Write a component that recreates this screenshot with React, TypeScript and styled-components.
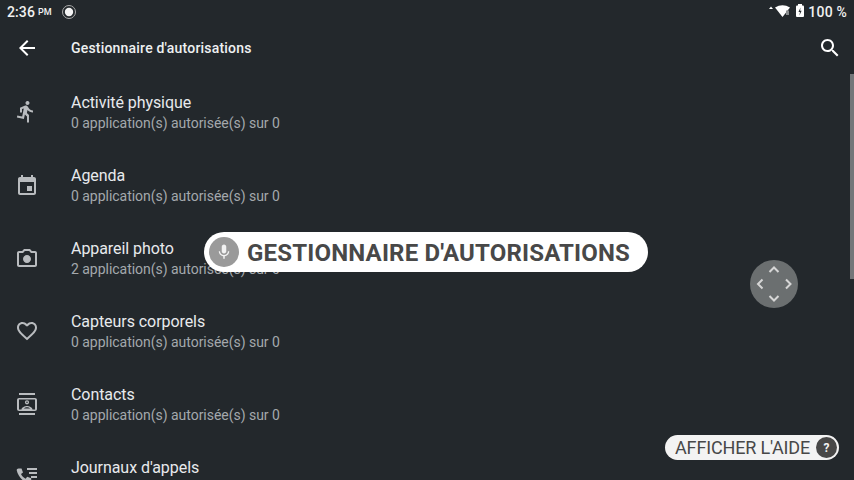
import React from "react";
import styled, { createGlobalStyle } from "styled-components";

const Global = createGlobalStyle`
  html, body { margin: 0; padding: 0; width: 854px; height: 480px; overflow: hidden; background: #23282c; }
  * { box-sizing: border-box; }
`;

const Screen = styled.div`
  position: relative;
  width: 854px;
  height: 480px;
  overflow: hidden;
  background: #23282c;
  font-family: Roboto, sans-serif;
  color: #fff;
  display: flex;
  flex-direction: column;
`;

const StatusBar = styled.div`
  height: 24px;
  flex: none;
  display: flex;
  align-items: center;
  padding: 0 7px 0 7px;
  color: #f1f1f1;
`;
const Clock = styled.span`
  font-size: 14px;
  font-weight: 500;
  letter-spacing: 0.1px;
`;
const Meridiem = styled.span`
  font-size: 9px;
  font-weight: 500;
  margin-left: 3px;
`;
const StatusLeftIcon = styled.svg`
  width: 16px;
  height: 16px;
  margin-left: 9px;
`;
const Spacer = styled.div`
  flex: 1;
`;
const StatusIcons = styled.svg`
  width: 36px;
  height: 16px;
  flex: none;
`;
const Battery = styled.span`
  font-size: 14px;
  font-weight: 500;
  margin-left: 3px;
  letter-spacing: 0.2px;
`;

const AppBar = styled.div`
  height: 48px;
  flex: none;
  display: flex;
  align-items: center;
  padding: 0 12px 0 15px;
`;
const AppIcon = styled.svg`
  width: 24px;
  height: 24px;
  fill: #fff;
  flex: none;
`;
const Title = styled.h1`
  margin: 0 0 0 32px;
  font-size: 14px;
  font-weight: 500;
  letter-spacing: 0.2px;
  color: #eef0f1;
  flex: 1;
`;

const List = styled.div`
  padding-top: 4px;
  display: flex;
  flex-direction: column;
`;
const Row = styled.div`
  height: 73px;
  flex: none;
  display: flex;
  align-items: center;
  padding-left: 15px;
`;
const RowIcon = styled.svg`
  width: 24px;
  height: 24px;
  fill: #b9bcbf;
  fill-rule: evenodd;
  flex: none;
  margin-right: 32px;
`;
const RowText = styled.div`
  display: flex;
  flex-direction: column;
`;
const RowTitle = styled.div`
  font-size: 16px;
  line-height: 21px;
  letter-spacing: -0.06px;
  color: #e8eaed;
`;
const RowSub = styled.div`
  font-size: 14px;
  line-height: 21px;
  letter-spacing: -0.03px;
  color: #a4a8ac;
`;

const Scrollbar = styled.div`
  position: absolute;
  right: 0;
  top: 74px;
  width: 4px;
  height: 205px;
  background: #737679;
`;

const VoicePill = styled.div`
  position: absolute;
  left: 204px;
  top: 232px;
  width: 444px;
  height: 40px;
  border-radius: 20px;
  background: #fff;
  display: flex;
  align-items: center;
  padding-left: 5px;
`;
const MicCircle = styled.div`
  width: 30px;
  height: 30px;
  border-radius: 50%;
  background: #9a9a9a;
  display: flex;
  align-items: center;
  justify-content: center;
  flex: none;
`;
const PillText = styled.span`
  margin: 1px 0 0 8px;
  font-size: 24px;
  font-weight: 700;
  letter-spacing: 0.18px;
  color: #484848;
  white-space: nowrap;
`;

const DPad = styled.div`
  position: absolute;
  left: 750px;
  top: 260px;
  width: 48px;
  height: 48px;
  border-radius: 50%;
  background: #6b6f70;
`;
const DPadIcon = styled.svg`
  display: block;
  width: 48px;
  height: 48px;
  fill: none;
  stroke: #d6d6d6;
  stroke-width: 2;
`;

const HelpPill = styled.div`
  position: absolute;
  left: 665px;
  top: 435px;
  width: 174px;
  height: 25px;
  border-radius: 13px;
  background: #f3f3f3;
  display: flex;
  align-items: center;
  padding-left: 10px;
`;
const HelpText = styled.span`
  font-size: 18px;
  letter-spacing: -0.15px;
  color: #484848;
  white-space: nowrap;
`;
const HelpBadge = styled.span`
  position: absolute;
  right: 2px;
  top: 2px;
  width: 21px;
  height: 21px;
  border-radius: 50%;
  background: #484848;
  color: #f3f3f3;
  font-size: 12px;
  font-weight: 700;
  display: flex;
  align-items: center;
  justify-content: center;
`;

const rows = [
  { t: "Activité physique", s: "0 application(s) autorisée(s) sur 0", o: "translate(-1 -1.5)", d: "M13.49 5.48c1.1 0 2-.9 2-2s-.9-2-2-2-2 .9-2 2 .9 2 2 2zm-3.6 13.9l1-4.4 2.1 2v6h2v-7.5l-2.1-2 .6-3c1.3 1.5 3.3 2.5 5.5 2.5v-2c-1.9 0-3.5-1-4.3-2.4l-1-1.6c-.4-.6-1-1-1.7-1-.3 0-.5.1-.8.1l-5.2 2.2v4.7h2v-3.4l1.8-.7-1.6 8.1-4.9-1-.4 2 7 1.4z" },
  { t: "Agenda", s: "0 application(s) autorisée(s) sur 0", o: "translate(0 0)", d: "M17 12h-5v5h5v-5zM16 1v2H8V1H6v2H5c-1.11 0-1.99.9-1.99 2L3 19c0 1.1.89 2 2 2h14c1.1 0 2-.9 2-2V5c0-1.1-.9-2-2-2h-1V1h-2zm3 18H5V8h14v11z" },
  { t: "Appareil photo", s: "2 application(s) autorisée(s) sur 0", o: "translate(0 -1)", d: "M20 5h-3.17L15 3H9L7.17 5H4c-1.1 0-2 .9-2 2v12c0 1.1.9 2 2 2h16c1.1 0 2-.9 2-2V7c0-1.1-.9-2-2-2zm0 14H4V7h4.05l1.83-2h4.24l1.83 2H20v12zM12 9c-2.21 0-4 1.79-4 4s1.79 4 4 4 4-1.79 4-4-1.79-4-4-4z" },
  { t: "Capteurs corporels", s: "0 application(s) autorisée(s) sur 0", o: "translate(0 -1)", d: "M16.5 3c-1.74 0-3.41.81-4.5 2.09C10.91 3.81 9.24 3 7.5 3 4.42 3 2 5.42 2 8.5c0 3.78 3.4 6.86 8.55 11.54L12 21.35l1.45-1.32C18.6 15.36 22 12.28 22 8.5 22 5.42 19.58 3 16.5 3zm-4.4 15.55l-.1.1-.1-.1C7.14 14.24 4 11.39 4 8.5 4 6.5 5.5 5 7.5 5c1.54 0 3.04.99 3.57 2.36h1.87C13.46 5.99 14.96 5 16.5 5c2 0 3.5 1.5 3.5 3.5 0 2.89-3.14 5.74-7.9 10.05z" },
  { t: "Contacts", s: "0 application(s) autorisée(s) sur 0", o: "translate(0 0)", d: "M20 0H4v2h16V0zM4 22h16v-2H4v2zM20 5H4c-1.1 0-2 .9-2 2v9c0 1.1.9 2 2 2h16c1.1 0 2-.9 2-2V7c0-1.1-.9-2-2-2zm0 11.5H4V6.5h16v10zM12 7.200a2.100 2.100 0 1 0 0 4.200 2.100 2.100 0 0 0 0-4.200zm0 1.300a.8.8 0 1 1 0 1.600.8.8 0 0 1 0-1.600zM6.500 16.500c0-2 3.500-3.500 5.500-3.500s5.500 1.500 5.500 3.500zm2.300-1h6.400c-.8-.7-2.200-1.200-3.200-1.200s-2.400.5-3.200 1.200z" },
  { t: "Journaux d'appels", s: "0 application(s) autorisée(s) sur 0", o: "translate(0 -2)", d: "M3.5 4.500h3l1.500 4-2 1.600c.9 2 2.600 3.700 4.600 4.600l1.600-2 4 1.500v3c0 1-.8 1.800-1.800 1.800C8.800 19 3 12.400 1.700 6.300 1.700 5.300 2.500 4.500 3.500 4.500zM12 4h10v2H12V4zm2 4h8v2h-8V8zm2 4h6v2h-6v-2z" },
];

export default function App() {
  return (
    <Screen>
      <Global />
      <StatusBar>
        <Clock>2:36</Clock>
        <Meridiem>PM</Meridiem>
        <StatusLeftIcon viewBox="0 0 16 16">
          <circle cx="8" cy="8" r="6.5" fill="none" stroke="#aaa" strokeWidth="1" />
          <circle cx="8" cy="8" r="4.2" fill="#f4f4f4" />
        </StatusLeftIcon>
        <Spacer />
        <StatusIcons viewBox="0 0 36 16">
          <path d="M0 5l2-2.500L4 5z" fill="#fff" />
          <path d="M6 3.500Q13.500-1 21 3.500L13.500 13z" fill="#fff" />
          <path d="M17 6.500h3v4.500h-3z" fill="#8a8d8f" />
          <rect x="27" y="1.500" width="8" height="11.500" rx="1" fill="#fff" />
          <rect x="29" y="0" width="4" height="2" fill="#fff" />
          <path d="M31.500 3.500l-2 4.500h1.500l-.6 3.500 2.200-4.700h-1.500z" fill="#23282c" />
        </StatusIcons>
        <Battery>100 %</Battery>
      </StatusBar>
      <AppBar>
        <AppIcon viewBox="0 0 24 24">
          <path d="M20 11H7.830l5.590-5.590L12 4l-8 8 8 8 1.410-1.410L7.830 13H20v-2z" />
        </AppIcon>
        <Title>Gestionnaire d'autorisations</Title>
        <AppIcon viewBox="0 0 24 24">
          <path d="M15.500 14h-.79l-.28-.27C15.410 12.590 16 11.110 16 9.500 16 5.910 13.090 3 9.500 3S3 5.910 3 9.500 5.910 16 9.500 16c1.610 0 3.090-.59 4.230-1.570l.27.28v.79l5 4.990L20.490 19l-4.990-5zm-6 0C7.010 14 5 11.990 5 9.500S7.010 5 9.500 5 14 7.010 14 9.500 11.990 14 9.500 14z" />
        </AppIcon>
      </AppBar>
      <List>
        {rows.map((r) => (
          <Row key={r.t}>
            <RowIcon viewBox="0 0 24 24"><path d={r.d} transform={r.o} /></RowIcon>
            <RowText>
              <RowTitle>{r.t}</RowTitle>
              <RowSub>{r.s}</RowSub>
            </RowText>
          </Row>
        ))}
      </List>
      <Scrollbar />
      <VoicePill>
        <MicCircle>
          <svg width="18" height="18" viewBox="0 0 24 24" fill="#f2f2f2">
            <path d="M12 14c1.660 0 3-1.340 3-3V5c0-1.660-1.340-3-3-3S9 3.340 9 5v6c0 1.660 1.340 3 3 3zm5.300-3c0 3-2.540 5.100-5.300 5.100S6.700 14 6.700 11H5c0 3.410 2.720 6.230 6 6.720V21h2v-3.280c3.280-.48 6-3.300 6-6.720h-1.700z" />
          </svg>
        </MicCircle>
        <PillText>GESTIONNAIRE D'AUTORISATIONS</PillText>
      </VoicePill>
      <DPad>
        <DPadIcon viewBox="0 0 48 48">
          <path d="M19.500 12L24 7.500l4.500 4.500M19.500 36l4.500 4.500 4.500-4.500M12.500 19.500L8 24l4.500 4.500M36 19.500l4.500 4.500-4.500 4.500" />
        </DPadIcon>
      </DPad>
      <HelpPill>
        <HelpText>AFFICHER L'AIDE</HelpText>
        <HelpBadge>?</HelpBadge>
      </HelpPill>
    </Screen>
  );
}
